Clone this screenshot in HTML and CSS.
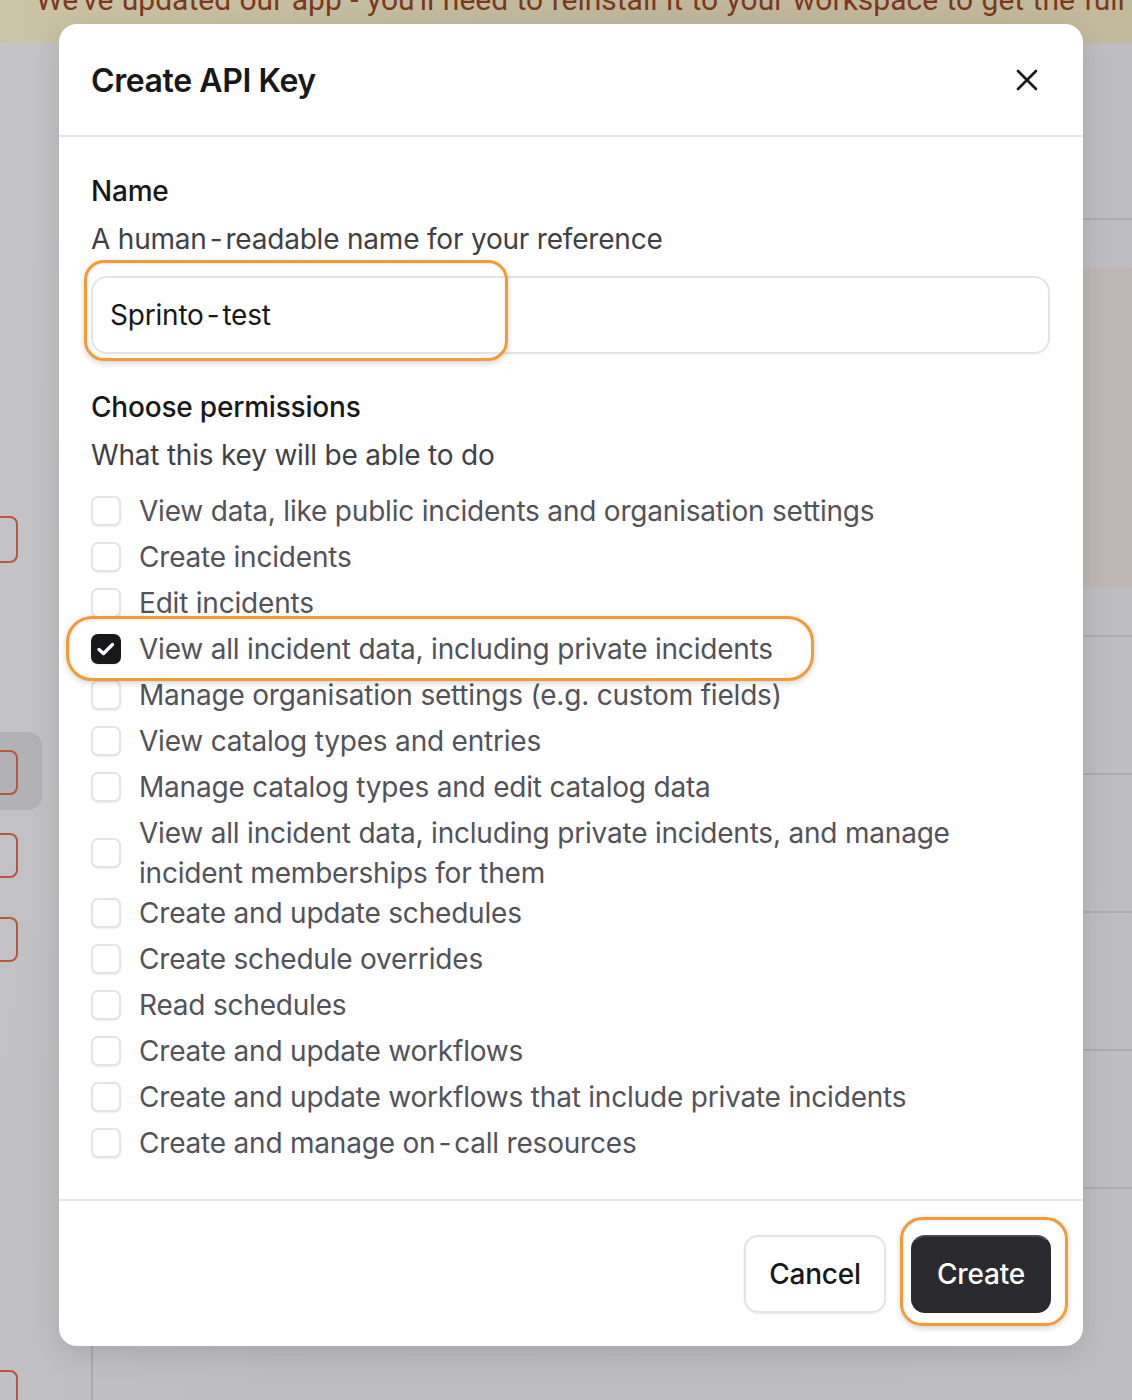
FILE: index.html
```html
<!DOCTYPE html>
<html lang="en">
<head>
<meta charset="utf-8">
<title>Create API Key</title>
<link rel="stylesheet" href="styles.css">
</head>
<body>
<div class="banner"><span class="banner-text">We've updated our app - you'll need to reinstall it to your workspace to get the full info</span></div>
<div class="page">
  <aside class="sidebar">
    <div class="side-box s1"></div>
    <div class="side-active"><div class="side-box s2"></div></div>
    <div class="side-box s3"></div>
    <div class="side-box s4"></div>
    <div class="side-box s5"></div>
  </aside>
  <main class="main">
    <div class="main-head"></div>
    <div class="main-hero"></div>
    <div class="main-row"></div>
    <div class="main-row"></div>
    <div class="main-row"></div>
    <div class="main-row"></div>
    <div class="main-row"></div>
  </main>
</div>

<div class="modal">
  <header class="modal-header">
    <h1 class="modal-title">Create API Key</h1>
    <svg class="close-icon" width="22" height="22" viewBox="0 0 22 22" aria-hidden="true"><path d="M2 2 L20 20 M20 2 L2 20" stroke="#18181b" stroke-width="2.6" stroke-linecap="round"/></svg>
  </header>
  <section class="modal-body">
    <div class="field-label">Name</div>
    <div class="field-help">A human<span class="hy">-</span>readable name for your reference</div>
    <div class="input">Sprinto<span class="hy">-</span>test</div>

    <div class="field-label perm-label">Choose permissions</div>
    <div class="field-help">What this key will be able to do</div>
    <ul class="perm-list">
      <li class="perm"><span class="cb"></span><span class="perm-text">View data, like public incidents and organisation settings</span></li>
      <li class="perm"><span class="cb"></span><span class="perm-text">Create incidents</span></li>
      <li class="perm"><span class="cb"></span><span class="perm-text">Edit incidents</span></li>
      <li class="perm"><span class="cb cb-checked"><svg width="20" height="16" viewBox="0 0 20 16" aria-hidden="true"><path d="M3 8.5 L7.5 12.5 L16.5 3.5" fill="none" stroke="#fff" stroke-width="3.4" stroke-linecap="round" stroke-linejoin="round"/></svg></span><span class="perm-text">View all incident data, including private incidents</span></li>
      <li class="perm"><span class="cb"></span><span class="perm-text">Manage organisation settings (e.g. custom fields)</span></li>
      <li class="perm"><span class="cb"></span><span class="perm-text">View catalog types and entries</span></li>
      <li class="perm"><span class="cb"></span><span class="perm-text">Manage catalog types and edit catalog data</span></li>
      <li class="perm perm-multi"><span class="cb"></span><span class="perm-text">View all incident data, including private incidents, and manage incident memberships for them</span></li>
      <li class="perm"><span class="cb"></span><span class="perm-text">Create and update schedules</span></li>
      <li class="perm"><span class="cb"></span><span class="perm-text">Create schedule overrides</span></li>
      <li class="perm"><span class="cb"></span><span class="perm-text">Read schedules</span></li>
      <li class="perm"><span class="cb"></span><span class="perm-text">Create and update workflows</span></li>
      <li class="perm"><span class="cb"></span><span class="perm-text">Create and update workflows that include private incidents</span></li>
      <li class="perm"><span class="cb"></span><span class="perm-text">Create and manage on<span class="hy">-</span>call resources</span></li>
    </ul>
  </section>
  <footer class="modal-footer">
    <button class="btn btn-secondary">Cancel</button>
    <button class="btn btn-primary">Create</button>
  </footer>

  <div class="hl hl-input"></div>
  <div class="hl hl-row"></div>
  <div class="hl hl-create"></div>
</div>
</body>
</html>
```

FILE: styles.css
```css
* { box-sizing: border-box; }

html, body {
  margin: 0;
  padding: 0;
}

body {
  width: 1132px;
  height: 1400px;
  overflow: hidden;
  background: linear-gradient(100deg, #c4c4c7 0%, #bdbdc1 40%, #bebec2 100%);
  font-family: Inter, "Noto Sans", sans-serif;
  position: relative;
}

/* Background page (dimmed by overlay) */
.banner {
  height: 43px;
  overflow: hidden;
  background: linear-gradient(90deg, #cbc3a5 0%, #bfb79d 60%, #c3ba9c 100%);
  padding-left: 36px;
}

.banner-text {
  display: block;
  margin-top: -19px;
  font-family: Roboto, "Liberation Sans", sans-serif;
  font-size: 30px;
  line-height: 38px;
  color: #7b3a20;
  white-space: nowrap;
  word-spacing: 1px;
}

.page {
  display: flex;
  height: 1357px;
}

.sidebar {
  width: 93px;
  flex: none;
  border-right: 2px solid #ababaf;
  display: flex;
  flex-direction: column;
}

.sidebar > * { flex: none; }

.side-box {
  width: 50px;
  height: 46px;
  margin-left: -32px;
  border: 2px solid #b9573d;
  border-radius: 8px;
}

.s1 { margin-top: 473px; height: 47px; }

.side-active {
  margin-top: 169px;
  width: 42px;
  height: 78px;
  border-radius: 0 14px 14px 0;
  background: #b2b2b6;
  padding-top: 18px;
}

.s2 { height: 45px; }
.s3 { margin-top: 23px; height: 45px; }
.s4 { margin-top: 39px; height: 45px; }
.s5 { margin-top: 408px; height: 46px; }

.main {
  flex: 1;
  display: flex;
  flex-direction: column;
}

.main > * { flex: none; }

.main-head {
  height: 177px;
  border-bottom: 2px solid #adadb1;
}

.main-hero {
  margin-top: 48px;
  height: 320px;
  background: #bfb6b6;
}

.main-row {
  height: 138px;
  border-top: 2px solid #adadb1;
}

.main-hero + .main-row { margin-top: 47px; }

/* Modal */
.modal {
  position: absolute;
  left: 59px;
  top: 24px;
  width: 1024px;
  height: 1322px;
  background: #ffffff;
  border-radius: 18px;
  box-shadow: 0 8px 30px rgba(0, 0, 0, 0.12);
  display: flex;
  flex-direction: column;
}

.modal-header {
  height: 113px;
  flex: none;
  border-bottom: 2px solid #e6e6e9;
  display: flex;
  align-items: center;
  justify-content: space-between;
  padding: 0 45px 0 32px;
}

.modal-title {
  margin: 2px 0 0 0;
  font-size: 32px;
  font-weight: 600;
  color: #18181b;
  letter-spacing: -0.4px;
}

.close-icon { display: block; margin-top: 0; }

.modal-body {
  padding: 30px 32px 36px 32px;
  flex: none;
}

.hy { padding: 0 3px; }

.field-label {
  font-size: 28px;
  line-height: 48px;
  font-weight: 500;
  color: #18181b;
  letter-spacing: -0.2px;
}

.field-help {
  font-size: 28px;
  line-height: 48px;
  color: #3f3f46;
  letter-spacing: -0.2px;
}

.perm-label { margin-top: 29px; }

.input {
  margin-top: 13px;
  height: 78px;
  width: 959px;
  border: 2px solid #e4e4e7;
  border-radius: 16px;
  padding: 0 17px;
  display: flex;
  align-items: center;
  font-size: 28px;
  color: #18181b;
  letter-spacing: -0.2px;
  box-shadow: 0 1px 2px rgba(0, 0, 0, 0.04);
}

.perm-list {
  list-style: none;
  margin: 12px 0 0 0;
  padding: 0;
  display: flex;
  flex-direction: column;
  gap: 6px;
}

.perm {
  display: flex;
  align-items: center;
  gap: 18px;
  min-height: 40px;
}

.perm-multi { margin-bottom: -6px; }

.perm-text {
  font-size: 28px;
  line-height: 40px;
  color: #52525b;
  max-width: 830px;
  letter-spacing: -0.2px;
}

.cb {
  flex: none;
  width: 30px;
  height: 30px;
  border: 2px solid #e4e4e7;
  border-radius: 7px;
  background: #fff;
  box-shadow: 0 1px 2px rgba(0, 0, 0, 0.08);
  display: flex;
  align-items: center;
  justify-content: center;
}

.cb-checked {
  background: #18181b;
  border-color: #18181b;
}

.modal-footer {
  flex: 1;
  border-top: 2px solid #e6e6e9;
  display: flex;
  align-items: center;
  justify-content: flex-end;
  gap: 25px;
  padding: 0 32px;
}

.btn {
  font-family: Inter, "Noto Sans", sans-serif;
  font-size: 28px;
  font-weight: 500;
  height: 78px;
  border-radius: 14px;
  padding: 0;
  cursor: pointer;
  letter-spacing: -0.2px;
}

.btn-secondary {
  width: 142px;
  background: #fff;
  color: #18181b;
  border: 2px solid #e4e4e7;
  box-shadow: 0 1px 3px rgba(0, 0, 0, 0.08);
}

.btn-primary {
  width: 140px;
  background: #2a292e;
  color: #ffffff;
  border: 2px solid #2a292e;
  border-top-color: #4a494f;
}

/* Annotation highlights */
.hl {
  position: absolute;
  border: 3px solid #f29b36;
  box-shadow: 0 2px 6px rgba(0, 0, 0, 0.18), inset 0 1px 3px rgba(0, 0, 0, 0.08);
  pointer-events: none;
}

.hl-input {
  left: 25px;
  top: 236px;
  width: 424px;
  height: 101px;
  border-radius: 20px;
}

.hl-row {
  left: 7px;
  top: 592px;
  width: 748px;
  height: 65px;
  border-radius: 26px;
}

.hl-create {
  left: 841px;
  top: 1193px;
  width: 168px;
  height: 109px;
  border-radius: 22px;
}
```
